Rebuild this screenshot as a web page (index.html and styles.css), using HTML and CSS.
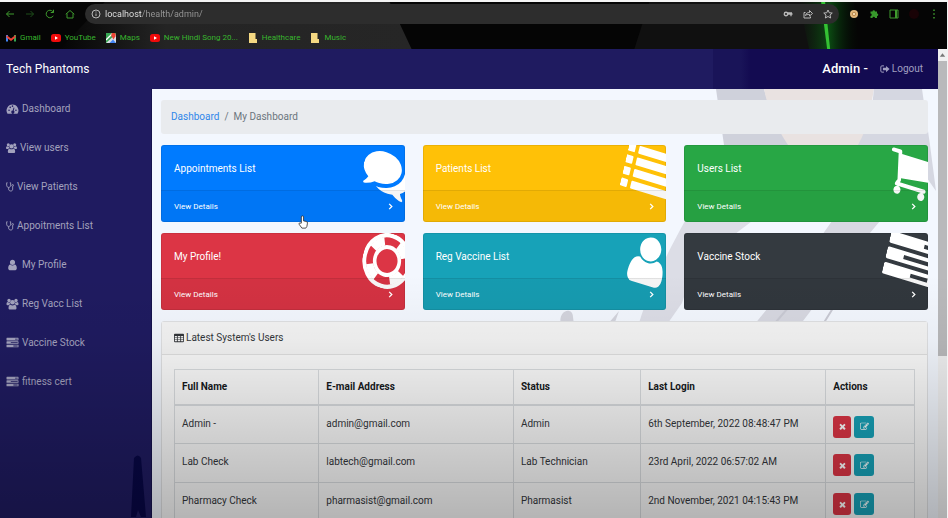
FILE: index.html
```html
<!DOCTYPE html>
<html lang="en">
<head>
<meta charset="utf-8">
<title>Tech Phantoms - Admin</title>
<link rel="stylesheet" href="styles.css">
</head>
<body>
<svg class="defs" aria-hidden="true">
  <symbol id="comments" viewBox="0 0 1792 1792"><path d="M1408 768q0 139-94 257t-256.500 186.500-353.500 68.500q-86 0-176-16-124 88-278 128-36 9-86 16h-3q-11 0-20.500-8t-11.500-21q-1-3-1-6.500t.5-6.500 2-6l2.500-5 3.500-5.500 4-5 4.500-5 4-4.500q5-6 23-25t26-29.500 22.500-29 25-38.500 20.500-44q-124-72-195-177t-71-224q0-139 94-257t256.500-186.500 353.500-68.500 353.500 68.500 256.500 186.500 94 257zm384 256q0 120-71 224.500t-195 176.500q10 24 20.500 44t25 38.500 22.500 29 26 29.500 23 25q1 1 4 4.500t4.500 5 4 5 3.500 5.500l2.500 5 2 6 .5 6.500-1 6.500q-3 14-13 22t-22 7q-50-7-86-16-154-40-278-128-90 16-176 16-271 0-472-132 58 4 88 4 161 0 309-45t264-129q125-92 192-212t67-254q0-77-23-152 129 71 204 178t75 230z"/></symbol>
  <symbol id="list" viewBox="0 0 1792 1792"><g id="list-row"><rect y="128" width="256" height="256" rx="32"/><rect x="384" y="128" width="1408" height="256" rx="32"/></g><use href="#list-row" y="384"/><use href="#list-row" y="768"/><use href="#list-row" y="1152"/></symbol>
  <symbol id="cart" viewBox="0 0 1792 1792"><path d="M704 1536q0 52-38 90t-90 38-90-38-38-90 38-90 90-38 90 38 38 90zm896 0q0 52-38 90t-90 38-90-38-38-90 38-90 90-38 90 38 38 90zm128-1088v512q0 24-16.500 42.500t-40.500 21.500l-1044 122q13 60 13 70 0 16-24 64h920q26 0 45 19t19 45-19 45-45 19h-1024q-26 0-45-19t-19-45q0-11 8-31.500t16-36 21.500-40 15.500-29.500l-177-823h-204q-26 0-45-19t-19-45 19-45 45-19h256q16 0 28.500 6.500t19.500 15.500 13 24.500 8 26 5.500 29.500 4.500 26h1201q26 0 45 19t19 45z"/></symbol>
  <symbol id="ring" viewBox="0 0 1792 1792"><g fill="none" stroke="currentColor"><circle cx="896" cy="896" r="826" stroke-width="140"/><circle cx="896" cy="896" r="448" stroke-width="130"/><circle cx="896" cy="896" r="636" stroke-width="270" pathLength="360" stroke-dasharray="42 48" stroke-dashoffset="-24"/></g></symbol>
  <symbol id="user" viewBox="0 0 1792 1792"><path d="M1536 1399q0 109-62.500 187t-150.500 78h-854q-88 0-150.500-78t-62.500-187q0-85 8.500-160.500t31.500-152 58.500-131 94-89 134.500-34.500q131 128 313 128t313-128q76 0 134.500 34.500t94 89 58.500 131 31.500 152 8.500 160.500zm-256-887q0 159-112.500 271.500t-271.500 112.500-271.500-112.500-112.500-271.500 112.500-271.500 271.500-112.500 271.500 112.500 112.500 271.500z"/></symbol>
  <symbol id="tasks" viewBox="0 0 1792 1792"><path d="M1024 1408h640v-128h-640v128zm-384-512h1024v-128h-1024v128zm640-512h384v-128h-384v128zm512 832v256q0 26-19 45t-45 19h-1664q-26 0-45-19t-19-45v-256q0-26 19-45t45-19h1664q26 0 45 19t19 45zm0-512v256q0 26-19 45t-45 19h-1664q-26 0-45-19t-19-45v-256q0-26 19-45t45-19h1664q26 0 45 19t19 45zm0-512v256q0 26-19 45t-45 19h-1664q-26 0-45-19t-19-45v-256q0-26 19-45t45-19h1664q26 0 45 19t19 45z"/></symbol>
  <symbol id="edit" viewBox="0 0 1792 1792"><path d="M888 1184l116-116-152-152-116 116v56h96v96h56zm440-720q-16-16-33 1l-350 350q-17 17-1 33t33-1l350-350q17-17 1-33zm80 594v190q0 119-84.500 203.500t-203.500 84.500h-832q-119 0-203.500-84.500t-84.500-203.500v-832q0-119 84.500-203.500t203.500-84.500h832q63 0 117 25 15 7 18 23 3 17-9 29l-49 49q-14 14-32 8-23-6-45-6h-832q-66 0-113 47t-47 113v832q0 66 47 113t113 47h832q66 0 113-47t47-113v-126q0-13 9-22l64-64q15-15 35-7t20 29zm-96-738l288 288-672 672h-288v-288zm444 132l-92 92-288-288 92-92q28-28 68-28t68 28l152 152q28 28 28 68t-28 68z"/></symbol>
  <symbol id="times" viewBox="0 0 1792 1792"><path d="M1490 1322q0 40-28 68l-136 136q-28 28-68 28t-68-28l-294-294-294 294q-28 28-68 28t-68-28l-136-136q-28-28-28-68t28-68l294-294-294-294q-28-28-28-68t28-68l136-136q28-28 68-28t68 28l294 294 294-294q28-28 68-28t68 28l136 136q28 28 28 68t-28 68l-294 294 294 294q28 28 28 68z"/></symbol>
  <symbol id="angle" viewBox="0 0 8 10"><path d="M2.500 2 5.500 5 2.500 8" fill="none" stroke="currentColor" stroke-width="1.500"/></symbol>
  <symbol id="gauge" viewBox="0 0 24 24"><path fill-rule="evenodd" d="M12 3A12 12 0 0 0 2 21.500h20A12 12 0 0 0 12 3zM3.500 14.500a1.600 1.600 0 1 1 3.200 0 1.600 1.600 0 0 1-3.200 0zM5.800 8.700a1.600 1.600 0 1 1 3.200 0 1.600 1.600 0 0 1-3.200 0zM10.400 6.300a1.600 1.600 0 1 1 3.200 0 1.600 1.600 0 0 1-3.200 0zM17.300 14.500a1.600 1.600 0 1 1 3.200 0 1.600 1.600 0 0 1-3.200 0zM14.200 9l1.700.5-1.500 6.200a3 3 0 1 1-1.900-.5z"/></symbol>
  <symbol id="users" viewBox="0 0 24 24"><circle cx="5" cy="5" r="3.300"/><circle cx="19" cy="5" r="3.300"/><circle cx="12" cy="8.500" r="4.700"/><path d="M0 12.500C0 9.500 1 8 2.500 8c1 .9 2.400 1.300 4 1 .2 1.500.6 2.600 1.400 3.500-1.400 0-2.800.6-3.700 1.800H2c-1.200 0-2-.7-2-1.800zM24 12.500c0-3-1-4.500-2.500-4.500-1 .9-2.400 1.300-4 1-.2 1.500-.6 2.600-1.400 3.500 1.400 0 2.800.6 3.700 1.800H22c1.200 0 2-.7 2-1.800zM4 20c0-4 1.300-6.500 4-6.500 2.400 1.800 5.600 1.800 8 0 2.700 0 4 2.500 4 6.500 0 2-1.200 3-3 3H7c-1.800 0-3-1-3-3z"/></symbol>
  <symbol id="steth" viewBox="0 0 18 24"><path d="M3.500 2.500H1.500V8c0 3 2 5 4.500 5s4.500-2 4.500-5V2.500h-2M6 13v3.500C6 19.500 8 21 10.700 21s4.300-1.500 4.300-4.500V11" fill="none" stroke="currentColor" stroke-width="2"/><circle cx="15" cy="8.500" r="2" fill="none" stroke="currentColor" stroke-width="1.800"/></symbol>
  <symbol id="signout" viewBox="0 0 24 24"><path d="M9.500 4.500h-5c-1.500 0-2.500 1-2.500 2.500v10c0 1.500 1 2.500 2.500 2.500h5" fill="none" stroke="currentColor" stroke-width="2.400"/><path d="m14.500 4.500 8.500 7.500-8.500 7.500V15H7V9h7.500z"/></symbol>
  <symbol id="table" viewBox="0 0 24 24"><path fill-rule="evenodd" d="M2 2h20q2 0 2 2v16q0 2-2 2H2q-2 0-2-2V4q0-2 2-2zm0 5v3.500h5V7zm7 0v3.500h6V7zm8 0v3.500h5V7zM2 12v3.500h5V12zm7 0v3.500h6V12zm8 0v3.500h5V12zM2 17v3h5v-3zm7 0v3h6v-3zm8 0v3h5v-3z"/></symbol>
  <symbol id="youtube" viewBox="0 0 20 20"><rect y="2" width="20" height="16" rx="5" fill="#f00b0b"/><path d="m8 6.500 6 3.500-6 3.500z" fill="#fff"/></symbol>
  <symbol id="folder" viewBox="0 0 20 20"><path d="M2 0h13v12h3v8H2z" fill="#f5d982"/></symbol>
</svg>

<header class="browser">
  <svg class="browser-art" viewBox="0 0 948 49" preserveAspectRatio="none" aria-hidden="true">
    <defs><linearGradient id="glow"><stop offset="0" stop-color="#0c2a0c" stop-opacity="0"/><stop offset=".5" stop-color="#0b4a12"/><stop offset="1" stop-color="#041006" stop-opacity="0"/></linearGradient>
    <linearGradient id="sheen"><stop offset="0" stop-color="#050505"/><stop offset=".3" stop-color="#242424"/><stop offset="1" stop-color="#262626"/></linearGradient></defs>
    <path d="M60 49 105 0h285l22 49z" fill="url(#sheen)"/><path d="M635 49 650 0h175l3 49z" fill="#101010"/>
    <path d="M800 0h55l5 49h-50z" fill="url(#glow)"/><path d="M822 0h4l5 49h-3z" fill="#35c234"/>
  </svg>
  <div class="toolbar">
    <button class="tool" aria-label="Back"><svg viewBox="0 0 20 20"><path d="M18 10H3m6-6-6 6 6 6"/></svg></button>
    <button class="tool dim" aria-label="Forward"><svg viewBox="0 0 20 20"><path d="M2 10h15m-6-6 6 6-6 6"/></svg></button>
    <button class="tool" aria-label="Reload"><svg viewBox="0 0 20 20"><path d="M16.500 13.500A7.500 7.500 0 1 1 15.500 5l1.500 2M17 1.500V7h-5.500"/></svg></button>
    <button class="tool" aria-label="Home"><svg viewBox="0 0 20 20"><path d="M1.500 10.500 10 3l8.500 7.500M4 9v9h12V9"/></svg></button>
    <div class="address">
      <svg class="info" viewBox="0 0 20 20"><circle cx="10" cy="10" r="8"/><path d="M10 9v5m0-9v2"/></svg>
      <input type="text" aria-label="Address" value="localhost/health/admin/">
      <button class="tool pale" aria-label="Passwords"><svg viewBox="0 0 20 20"><path d="M9.500 10a3.500 3.500 0 1 1-7 0 3.500 3.500 0 0 1 7 0zm0 0H19m-3 0v4.500M9 8h9" stroke-width="2.600"/></svg></button>
      <button class="tool pale" aria-label="Share"><svg viewBox="0 0 20 20"><path d="M5 7H2v11h13v-3M5 13c1-5 5-6 8-6V3l6 6-6 5v-3c-4 0-6 0-8 2z"/></svg></button>
      <button class="tool pale" aria-label="Bookmark"><svg viewBox="0 0 20 20"><path d="m10 2 2.500 5.500 6 .6-4.500 4 1.300 5.900-5.300-3-5.300 3L6 12.100l-4.500-4 6-.6z"/></svg></button>
    </div>
    <button class="tool" aria-label="Cookie"><svg viewBox="0 0 20 20"><circle cx="10" cy="10" r="8" fill="#e3b87c" stroke="none"/><circle cx="10" cy="10" r="3.500" fill="#f3d7ac" stroke="#a77435" stroke-width="1.500"/></svg></button>
    <button class="tool" aria-label="Extensions"><svg viewBox="0 0 20 20"><path d="M3 5h4a2.500 2.500 0 1 1 5 0h4v4a2.500 2.500 0 1 1 0 5v4h-4a2.500 2.500 0 0 0-5 0H3v-4a2.500 2.500 0 0 0 0-5z" fill="#37982b" stroke="none"/></svg></button>
    <button class="tool" aria-label="Side panel"><svg viewBox="0 0 20 20"><path d="M2 2h16v16H2zM13 2v16M15 2v16" /></svg></button>
    <span class="avatar"></span>
    <button class="tool" aria-label="Menu"><svg viewBox="0 0 20 20"><path d="M10 1v3m0 4.500v3m0 4.500v3" stroke-width="3"/></svg></button>
  </div>
  <nav class="bookmarks" aria-label="Bookmarks">
    <a href="#"><svg viewBox="0 0 20 20"><path d="M0 4h4v13H0z" fill="#4285f4"/><path d="M16 4h4v13h-4z" fill="#34a853"/><path d="M1 4 10 11l9-7v5l-9 7-9-7z" fill="#ea4335"/></svg>Gmail</a>
    <a href="#"><svg><use href="#youtube"/></svg>YouTube</a>
    <a href="#"><svg viewBox="0 0 20 20"><rect width="20" height="20" fill="#39a854"/><path d="M0 20 20 2v18z" fill="#d8dde2"/><path d="m7 20 7-7 6 7z" fill="#4285f4"/><path d="M0 14 14 0" stroke="#fff" stroke-width="2.500"/><circle cx="15" cy="4" r="4.500" fill="#ea4335"/><path d="m11 6 4 7 4-7z" fill="#ea4335"/></svg>Maps</a>
    <a href="#"><svg><use href="#youtube"/></svg>New Hindi Song 20...</a>
    <a href="#"><svg><use href="#folder"/></svg>Healthcare</a>
    <a href="#"><svg><use href="#folder"/></svg>Music</a>
  </nav>
</header>

<div class="viewport">
  <div class="site">
    <header class="navbar">
      <a class="brand" href="#">Tech Phantoms</a>
      <div class="account"><strong>Admin -</strong><a href="#"><svg class="icon"><use href="#signout"/></svg>Logout</a></div>
    </header>
    <div class="columns">
      <nav class="sidebar" aria-label="Main">
        <a href="#"><svg class="fixed"><use href="#gauge"/></svg>Dashboard</a>
        <a href="#"><svg><use href="#users"/></svg>View users</a>
        <a href="#"><svg class="slim"><use href="#steth"/></svg>View Patients</a>
        <a href="#"><svg class="slim"><use href="#steth"/></svg>Appoitments List</a>
        <a href="#"><svg class="fixed"><use href="#user"/></svg>My Profile</a>
        <a href="#"><svg class="fixed"><use href="#users"/></svg>Reg Vacc List</a>
        <a href="#"><svg class="fixed"><use href="#tasks"/></svg>Vaccine Stock</a>
        <a href="#"><svg class="fixed"><use href="#tasks"/></svg>fitness cert</a>
        <svg class="sidebar-art" viewBox="0 0 18 62" aria-hidden="true"><path d="M4 3q4-5 7 0l5 59h-5l-3-7-2 7H1z" fill="#080746"/></svg>
      </nav>
      <main>
        <svg class="backdrop" viewBox="0 0 786 240" preserveAspectRatio="xMaxYMin slice" aria-hidden="true">
          <path d="M564 0h48c6 22 14 36 28 56h-68z" fill="#cfd1db"/>
          <path d="M612 0h110l-10 56h-76C624 38 616 20 612 0z" fill="#e9e2e1"/>
          <path d="M722 0h48l8 56 6 46-14-20-8-26h-56c10-18 14-34 16-56z" fill="#d5d7e1"/>
          <path d="M533 132h67c-28 22-58 42-70 82l-14 20h-29c12-38 30-73 46-102z" fill="#dcdde6"/>
          <path d="M680 132h48c-26 30-50 65-80 104h-46c30-36 54-70 78-104z" fill="#d7d8e1"/>
          <path d="M409 236c-4-15 12-19 12-8l1 8zM455 236l12-14-5 14z" fill="#d3d4dd"/>
          <path d="m618 240 30-35m20 35 28-45" stroke="#c9cad4" stroke-width="2"/>
        </svg>
        <nav class="breadcrumb" aria-label="Breadcrumb"><a href="#">Dashboard</a><span>/</span><span>My Dashboard</span></nav>
        <section class="cards">
          <article class="card blue"><svg class="card-icon"><use href="#comments"/></svg><h2>Appointments List</h2><a href="#">View Details<svg><use href="#angle"/></svg></a></article>
          <article class="card yellow"><svg class="card-icon"><use href="#list"/></svg><h2>Patients List</h2><a href="#">View Details<svg><use href="#angle"/></svg></a></article>
          <article class="card green"><svg class="card-icon"><use href="#cart"/></svg><h2>Users List</h2><a href="#">View Details<svg><use href="#angle"/></svg></a></article>
          <article class="card red"><svg class="card-icon"><use href="#ring"/></svg><h2>My Profile!</h2><a href="#">View Details<svg><use href="#angle"/></svg></a></article>
          <article class="card teal"><svg class="card-icon"><use href="#user"/></svg><h2>Reg Vaccine List</h2><a href="#">View Details<svg><use href="#angle"/></svg></a></article>
          <article class="card dark"><svg class="card-icon"><use href="#tasks"/></svg><h2>Vaccine Stock</h2><a href="#">View Details<svg><use href="#angle"/></svg></a></article>
        </section>
        <section class="panel">
          <h2><svg class="icon"><use href="#table"/></svg>Latest System's Users</h2>
          <div class="panel-body">
            <table>
              <colgroup><col class="name"><col class="email"><col class="status"><col class="login"><col class="actions"></colgroup>
              <thead><tr><th>Full Name</th><th>E-mail Address</th><th>Status</th><th>Last Login</th><th>Actions</th></tr></thead>
              <tbody>
                <tr><td>Admin -</td><td>admin@gmail.com</td><td>Admin</td><td>6th September, 2022 08:48:47 PM</td><td><div class="buttons"><button class="delete" aria-label="Delete"><svg><use href="#times"/></svg></button><button class="edit" aria-label="Edit"><svg><use href="#edit"/></svg></button></div></td></tr>
                <tr><td>Lab Check</td><td>labtech@gmail.com</td><td>Lab Technician</td><td>23rd April, 2022 06:57:02 AM</td><td><div class="buttons"><button class="delete" aria-label="Delete"><svg><use href="#times"/></svg></button><button class="edit" aria-label="Edit"><svg><use href="#edit"/></svg></button></div></td></tr>
                <tr><td>Pharmacy Check</td><td>pharmasist@gmail.com</td><td>Pharmasist</td><td>2nd November, 2021 04:15:43 PM</td><td><div class="buttons"><button class="delete" aria-label="Delete"><svg><use href="#times"/></svg></button><button class="edit" aria-label="Edit"><svg><use href="#edit"/></svg></button></div></td></tr>
              </tbody>
            </table>
          </div>
        </section>
      </main>
    </div>
  </div>
  <div class="scrollbar" aria-hidden="true"><svg viewBox="0 0 10 12"><path d="m2 8 3-4 3 4z"/></svg><span></span></div>
</div>
<svg class="pointer" viewBox="0 0 18 24" aria-hidden="true"><path d="M6 14V3q0-2 2-2t2 2v7l5 1q2 .5 2 3l-1 6-2 3H7l-5-7q-1-2 1-2z" fill="#fff" stroke="#333" stroke-width="1.500"/></svg>
</body>
</html>
```
FILE: styles.css
```css
* { box-sizing: border-box; }
body {
  margin: 0;
  height: 100vh;
  display: flex;
  flex-direction: column;
  overflow: hidden;
  border-top: 2px solid #f4f4f4;
  border-right: 1px solid #f4f4f4;
  font: 10px/16px Roboto, sans-serif;
  color: #33363a;
  background: #050505;
}
a { color: inherit; text-decoration: none; }
h2 { margin: 0; font-size: inherit; font-weight: 400; }
button { padding: 0; border: 0; font: inherit; }
svg { display: block; flex: none; fill: currentColor; }
.defs { position: absolute; width: 0; height: 0; }

.browser { position: relative; flex: none; background: #050505; }
.browser-art { position: absolute; inset: 0; width: 100%; height: 100%; }
.toolbar { position: relative; display: flex; align-items: center; gap: 10px; height: 24px; padding: 0 8px 0 5px; }
.tool { width: 10px; height: 10px; background: none; color: #3f9b2e; }
.tool svg, .info { width: 10px; height: 10px; fill: none; stroke: currentColor; stroke-width: 2; }
.dim { color: #1e4f1b; }
.pale { color: #b9b9b9; }
.address {
  flex: 1;
  display: flex;
  align-items: center;
  gap: 10px;
  height: 20px;
  padding: 0 6px;
  border-radius: 10px;
  background: #2d2d2d;
}
.info { color: #b9b9b9; margin-right: -6px; }
.address input {
  flex: 1;
  min-width: 0;
  padding: 0;
  border: 0;
  outline: 0;
  font-family: inherit;
  font-size: 9px;
  color: transparent;
  background: linear-gradient(90deg, #ededed 37px, #999 37px);
  background-clip: text;
}
.avatar { width: 10px; height: 10px; border-radius: 50%; background: #190306; }
.bookmarks { position: relative; display: flex; gap: 10px; height: 23px; padding: 0 6px; align-items: center; font-size: 8px; color: #38b52e; }
.bookmarks a { display: flex; align-items: center; gap: 4px; }
.bookmarks svg { width: 10px; height: 10px; }

.viewport { position: relative; flex: 1; min-height: 0; display: flex; }
.viewport::after {
  content: "";
  position: absolute;
  inset: 0;
  pointer-events: none;
  background: linear-gradient(transparent 48%, rgba(0, 0, 0, .04) 62%, rgba(0, 0, 0, .28));
}
.site { flex: 1; min-width: 0; display: flex; flex-direction: column; }
.navbar {
  flex: none;
  display: flex;
  justify-content: space-between;
  align-items: center;
  height: 40px;
  padding: 0 15px 0 6px;
  color: #fff;
  background: linear-gradient(90deg, #1f1b60 76%, #191458 76%, #191458 79%, #130b51 80%);
}
.brand { font-size: 12px; }
.account { display: flex; align-items: center; gap: 12px; }
.account strong { font-size: 13px; font-weight: 500; }
.account a { display: flex; align-items: center; gap: 2px; color: #a19fc0; }
.icon { width: 10px; height: 10px; }
.columns { flex: 1; min-height: 0; display: flex; }
.sidebar { position: relative; flex: none; width: 152px; color: #a3a2bd; background: #1f1b60; border-right: 1px solid #15124c; }
.sidebar a { display: flex; align-items: center; gap: 3px; height: 39px; padding-left: 6px; }
.sidebar a svg { width: 11px; height: 12px; }
.sidebar a .fixed { width: 13px; }
.sidebar a .slim { width: 8px; }
.sidebar-art { position: absolute; right: 3px; bottom: 1px; width: 18px; height: 62px; }

main { position: relative; flex: 1; min-width: 0; padding: 11px 10px 0 9px; background: #f3f7fe; overflow: hidden; }
.backdrop { position: absolute; top: 0; right: 0; width: 100%; height: 240px; }
.breadcrumb { position: relative; display: flex; align-items: center; gap: 5px; height: 34px; padding: 0 10px; border-radius: 3px; background: #e9ebee; color: #6c757d; }
.breadcrumb a { color: #3087ea; }
.cards { position: relative; display: grid; grid-template-columns: repeat(3, 1fr); gap: 11px 18px; margin: 11px 0; }
.card { position: relative; overflow: hidden; border-radius: 3px; color: #fff; box-shadow: inset 0 0 0 1px rgba(0, 0, 0, .08); }
.card h2 { position: relative; padding: 16px 13px 13px; }
.card a { position: relative; display: flex; justify-content: space-between; align-items: center; height: 32px; padding: 0 11px 0 13px; border-top: 1px solid rgba(0, 0, 0, .08); background: rgba(0, 0, 0, .04); font-size: 8px; }
.card a svg { width: 7px; height: 9px; }
.card-icon { position: absolute; top: 0; right: -10px; width: 56px; height: 56px; transform: scaleX(.88) rotate(15deg); }
.blue { background: #007bff; }
.yellow { background: #ffc107; }
.green { background: #28a745; }
.red { background: #dc3545; }
.teal { background: #17a2b8; }
.dark { background: #343a40; }

.panel { position: relative; border: 1px solid #dfe0e2; border-radius: 3px 3px 0 0; background: #fafafa; }
.panel > h2 { display: flex; align-items: center; gap: 2px; height: 33px; padding: 0 12px; border-bottom: 1px solid #dfdfdf; background: #f4f4f4; }
.panel-body { padding: 14px 12px; }
table { width: 100%; table-layout: fixed; border-collapse: collapse; }
.name { width: 19.5%; }
.email { width: 26.3%; }
.status { width: 17.2%; }
.login { width: 25%; }
.actions { width: 12%; }
th, td { height: 39px; padding: 0 7px; border: 1px solid #d9dcdf; text-align: left; }
td { vertical-align: top; padding-top: 10px; }
th { height: 35px; color: #16191c; border-bottom-width: 2px; }
.buttons { display: flex; gap: 3px; }
.buttons button { display: grid; place-items: center; width: 18px; height: 22px; border-radius: 3px; color: #fff; }
.buttons .edit { width: 20px; background: #17a2b8; }
.buttons .delete { background: #dc3545; }
.buttons svg { width: 9px; height: 9px; }

.scrollbar { flex: none; display: flex; flex-direction: column; width: 9px; background: #f0f0f1; color: #777; }
.scrollbar svg { width: 9px; height: 12px; }
.scrollbar span { height: 63%; background: #b9b9bb; }
.pointer { position: absolute; left: 298px; top: 215px; width: 10px; height: 14px; }
```
